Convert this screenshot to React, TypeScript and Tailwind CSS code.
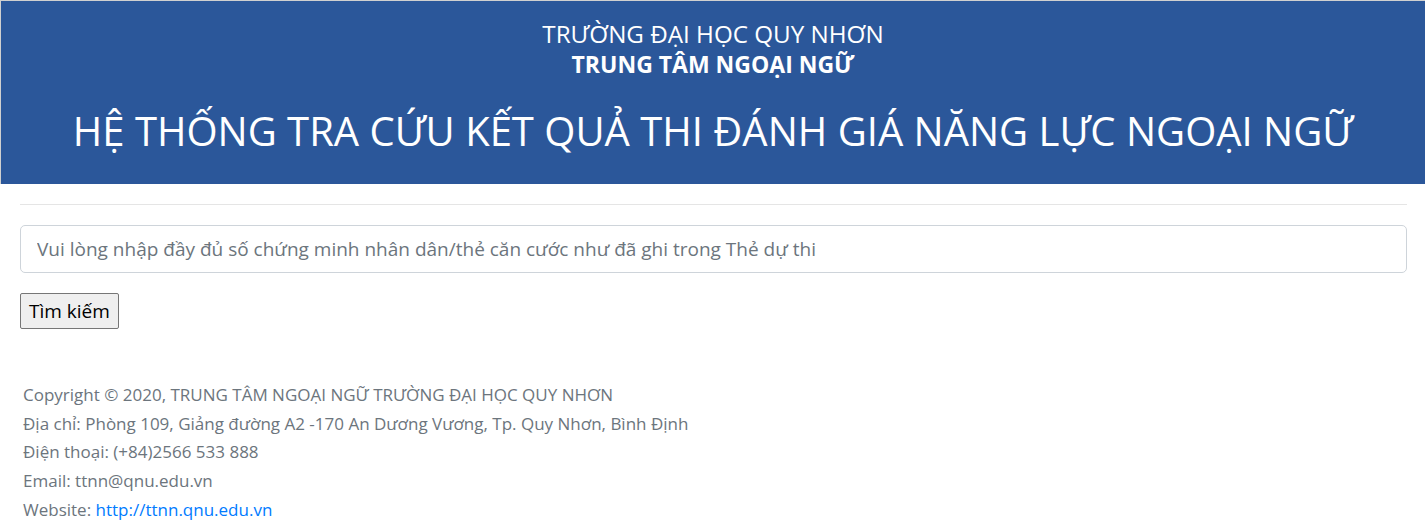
export default function App() {
  const font = { fontFamily: '"Open Sans", "Noto Sans", sans-serif' };
  return (
    <div className="min-h-screen bg-white" style={font}>
      <header className="bg-[#2b579a] border-t border-l border-[#d0d0d0] text-white text-center pt-[18px] pb-[26px]">
        <div className="text-[24.2px] leading-[30px]">TRƯỜNG ĐẠI HỌC QUY NHƠN</div>
        <div className="text-[23px] leading-[30px] font-bold">TRUNG TÂM NGOẠI NGỮ</div>
        <h1 className="mt-[25px] text-[40px] leading-[54px] font-medium">
          HỆ THỐNG TRA CỨU KẾT QUẢ THI ĐÁNH GIÁ NĂNG LỰC NGOẠI NGỮ
        </h1>
      </header>

      <main className="px-[20px] pr-[18px]">
        <hr className="mt-[20px] border-t border-[#e5e5e5]" />
        <input
          type="text"
          placeholder="Vui lòng nhập đầy đủ số chứng minh nhân dân/thẻ căn cước như đã ghi trong Thẻ dự thi"
          className="mt-[20px] block w-full h-[48px] px-[16px] text-[19px] border border-[#ced4da] rounded-[5px] placeholder:text-[#6c757d] outline-none"
        />
        <button className="mt-[20px] h-[36px] px-[8px] text-[19px] text-black bg-[#efefef] border border-[#767676] rounded-[2px]">
          Tìm kiếm
        </button>

        <footer className="mt-[52px] pl-[3px] text-[#6c757d] text-[17px] leading-[28.7px]">
          <div>Copyright © 2020, TRUNG TÂM NGOẠI NGỮ TRƯỜNG ĐẠI HỌC QUY NHƠN</div>
          <div>Địa chỉ: Phòng 109, Giảng đường A2 -170 An Dương Vương, Tp. Quy Nhơn, Bình Định</div>
          <div>Điện thoại: (+84)2566 533 888</div>
          <div>Email: ttnn@qnu.edu.vn</div>
          <div>
            Website:{" "}
            <a href="#" className="text-[#007bff]">
              http://ttnn.qnu.edu.vn
            </a>
          </div>
        </footer>
      </main>
    </div>
  );
}
